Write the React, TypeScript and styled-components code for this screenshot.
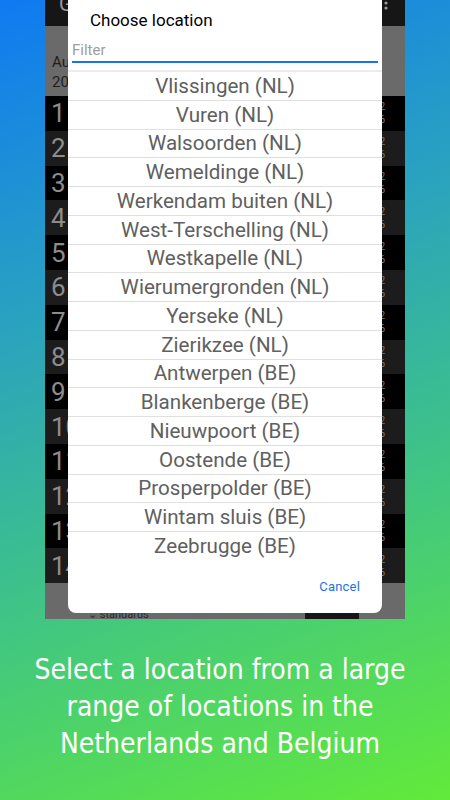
import { FC } from 'react';
import styled, { createGlobalStyle } from 'styled-components';

const locations = [
  'Vlissingen (NL)',
  'Vuren (NL)',
  'Walsoorden (NL)',
  'Wemeldinge (NL)',
  'Werkendam buiten (NL)',
  'West-Terschelling (NL)',
  'Westkapelle (NL)',
  'Wierumergronden (NL)',
  'Yerseke (NL)',
  'Zierikzee (NL)',
  'Antwerpen (BE)',
  'Blankenberge (BE)',
  'Nieuwpoort (BE)',
  'Oostende (BE)',
  'Prosperpolder (BE)',
  'Wintam sluis (BE)',
  'Zeebrugge (BE)',
];

const rows = Array.from({ length: 14 }, (_, i) => i + 1);

const App: FC = () => {
  return (
    <>
      <Global />
      <Page>
        <Screen>
          <AppBar>
            <AppTitle>Getijden</AppTitle>
            <svg width="6" height="14" viewBox="0 0 6 14">
              <circle cx="3" cy="3" r="1.6" fill="#9a9a9a" />
              <circle cx="3" cy="8" r="1.6" fill="#9a9a9a" />
            </svg>
          </AppBar>
          <HeaderBand>
            <HeaderLine>Augustus</HeaderLine>
            <HeaderLine>2021</HeaderLine>
          </HeaderBand>
          {rows.map((n) => (
            <Row key={n} $even={n % 2 === 0}>
              <DayNum>{n}</DayNum>
              <RowInfo>
                <span>05:12</span>
                <span>17:36</span>
              </RowInfo>
            </Row>
          ))}
          <FooterBand>
            <Standards>⌄ standards</Standards>
            <DarkButton />
          </FooterBand>

          <Dialog>
            <DialogTitle>Choose location</DialogTitle>
            <FilterInput placeholder="Filter" />
            <List>
              {locations.map((loc, i) => (
                <Item key={loc} $last={i === locations.length - 1}>
                  {loc}
                </Item>
              ))}
            </List>
            <DialogFooter>
              <CancelButton>Cancel</CancelButton>
            </DialogFooter>
          </Dialog>
        </Screen>
        <Caption>
          Select a location from a large
          <br />
          range of locations in the
          <br />
          Netherlands and Belgium
        </Caption>
      </Page>
    </>
  );
};

const Global = createGlobalStyle`
  html, body {
    margin: 0;
    padding: 0;
  }
  body {
    font-family: Roboto, "Liberation Sans", sans-serif;
  }
`;

const Page = styled.div`
  width: 450px;
  height: 800px;
  overflow: hidden;
  background: linear-gradient(160deg, #0f7af2 0%, #2aa3be 35%, #40c584 65%, #62ea3a 100%);
`;

const Screen = styled.div`
  position: relative;
  width: 360px;
  height: 619px;
  margin-left: 45px;
  background: #000;
  overflow: hidden;
  display: flex;
  flex-direction: column;
`;

const AppBar = styled.div`
  height: 26px;
  flex: none;
  background: #161616;
  display: flex;
  justify-content: space-between;
  align-items: flex-start;
  padding: 0 16px 0 14px;
  overflow: hidden;
`;

const AppTitle = styled.span`
  color: #9a9a9a;
  font-size: 20px;
  line-height: 20px;
  margin-top: -6px;
`;

const HeaderBand = styled.div`
  height: 70px;
  flex: none;
  background: #6a6a6a;
  display: flex;
  flex-direction: column;
  justify-content: flex-end;
  padding: 0 0 4px 7px;
  box-sizing: border-box;
`;

const HeaderLine = styled.span`
  color: #1e1e1e;
  font-size: 15px;
  line-height: 20px;
`;

const Row = styled.div<{ $even: boolean }>`
  height: 34.8px;
  flex: none;
  background: ${(p) => (p.$even ? '#1c1c1c' : '#000')};
  display: flex;
  align-items: center;
  justify-content: space-between;
  padding: 0 20px 0 6px;
  box-sizing: border-box;
`;

const DayNum = styled.span`
  color: #8c8c8c;
  font-size: 26px;
  line-height: 30px;
`;

const RowInfo = styled.span`
  display: flex;
  flex-direction: column;
  color: #7a7a7a;
  font-size: 10px;
  line-height: 13px;
  text-align: right;
`;

const FooterBand = styled.div`
  flex: 1;
  background: #6a6a6a;
  display: flex;
  align-items: flex-end;
  justify-content: space-between;
  padding: 0 46px 0 43px;
`;

const Standards = styled.span`
  color: #2a2a2a;
  font-size: 11px;
  line-height: 12px;
  margin-bottom: -2px;
`;

const DarkButton = styled.div`
  width: 54px;
  height: 18px;
  background: #1a1418;
  border-radius: 4px 4px 0 0;
`;

const Dialog = styled.div`
  position: absolute;
  left: 23px;
  top: -10px;
  width: 314px;
  height: 623px;
  background: #fff;
  border-radius: 8px;
  display: flex;
  flex-direction: column;
`;

const DialogTitle = styled.div`
  padding: 20px 0 0 22px;
  font-size: 17px;
  line-height: 20px;
  color: #000;
`;

const FilterInput = styled.input`
  margin: 8px 4px 0;
  height: 25px;
  padding: 0;
  border: none;
  border-bottom: 2px solid #1a73e8;
  outline: none;
  font-family: Roboto, sans-serif;
  font-size: 15px;
  color: #333;
  box-sizing: border-box;
  &::placeholder {
    color: #9e9e9e;
  }
`;

const List = styled.div`
  margin-top: 7px;
  border-top: 2px solid #ececec;
  display: flex;
  flex-direction: column;
`;

const Item = styled.div<{ $last: boolean }>`
  height: 28.75px;
  box-sizing: border-box;
  border-bottom: ${(p) => (p.$last ? 'none' : '1px solid #e0e0e0')};
  display: flex;
  align-items: center;
  justify-content: center;
  font-size: 20.6px;
  color: #606060;
`;

const DialogFooter = styled.div`
  flex: 1;
  display: flex;
  align-items: center;
  justify-content: flex-end;
  padding-right: 22px;
`;

const CancelButton = styled.span`
  color: #1a73e8;
  font-size: 13px;
  letter-spacing: 0.2px;
`;

const Caption = styled.div`
  margin-top: 32px;
  padding-right: 10px;
  text-align: center;
  white-space: nowrap;
  color: #fff;
  font-family: "DejaVu Sans Condensed", "DejaVu Sans", sans-serif;
  font-stretch: condensed;
  font-size: 28px;
  line-height: 37px;
`;

export default App;
